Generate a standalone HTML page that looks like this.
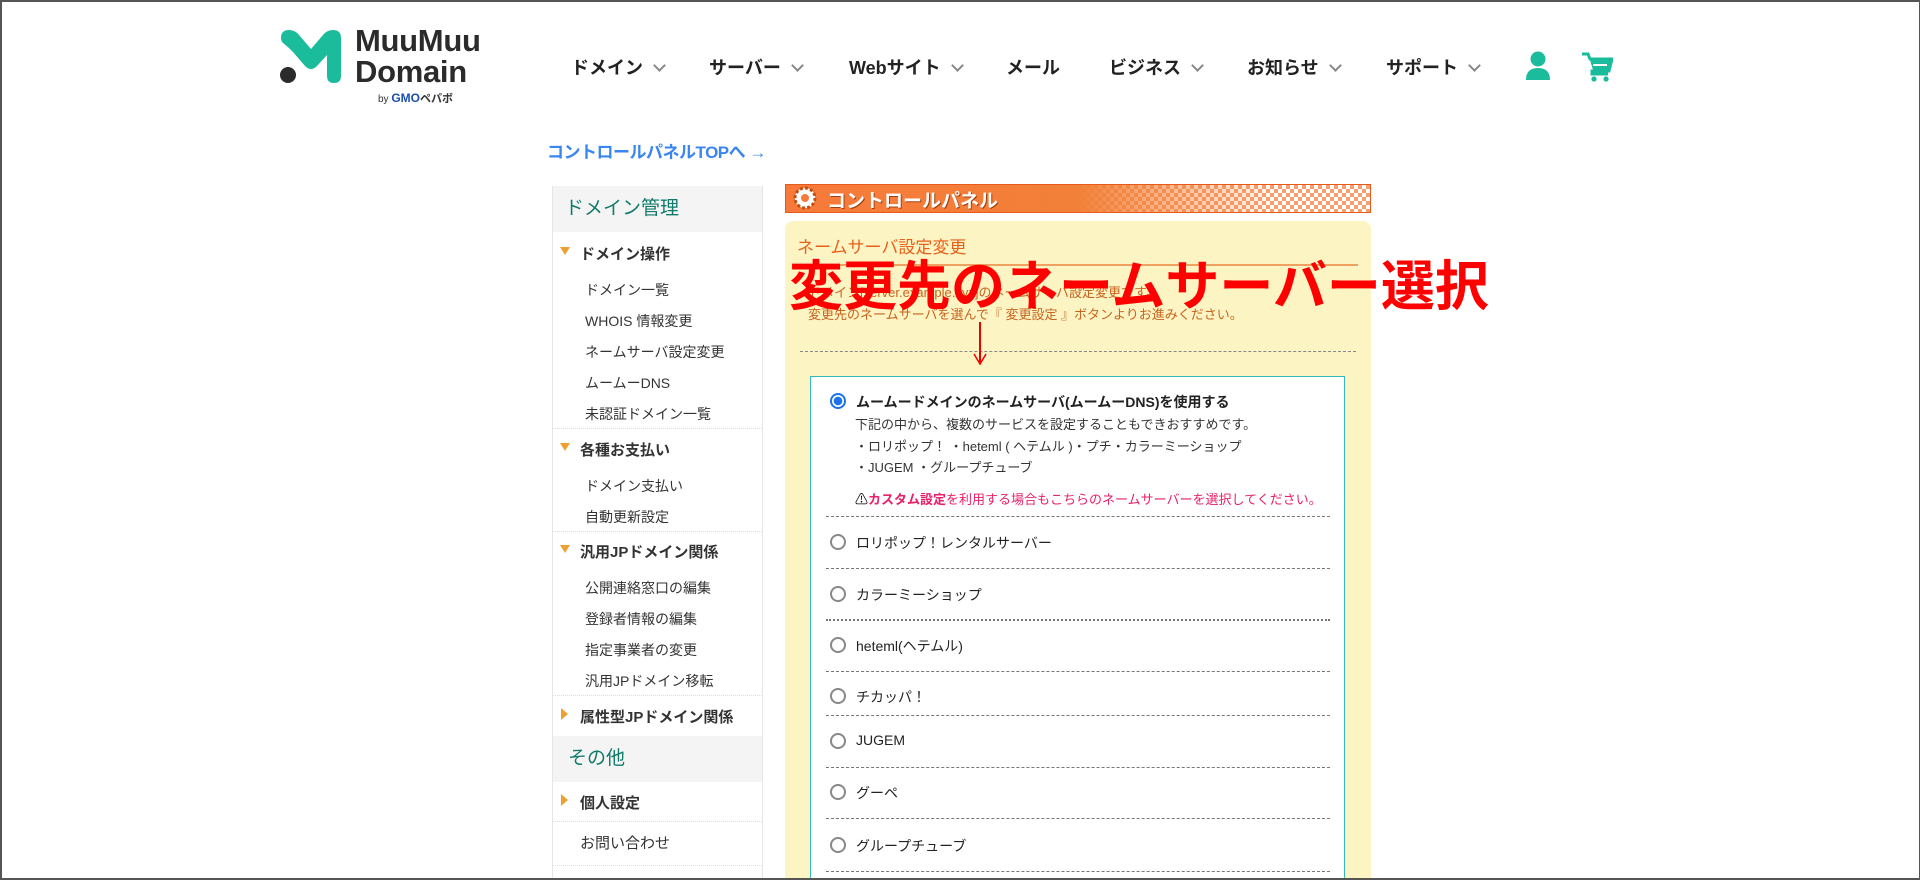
<!DOCTYPE html>
<html><head><meta charset="utf-8"><style>
*{margin:0;padding:0;box-sizing:border-box}
html{width:1920px;height:880px;overflow:hidden}
body{width:1920px;height:880px;overflow:hidden;background:#fff;font-family:"Liberation Sans","Noto Sans CJK JP",sans-serif;position:relative;color:#333}
.frame{position:absolute;left:0;top:0;width:1920px;height:880px;border:2px solid #555;border-right-width:1px;pointer-events:none;z-index:10}
.abs{position:absolute;white-space:nowrap}
.nav{font-size:18px;font-weight:bold;color:#222;top:54px}
.chev{display:inline-block;width:9px;height:9px;border-right:2px solid #888;border-bottom:2px solid #888;transform:rotate(45deg);margin-left:12px;position:relative;top:-4px}
.side{position:absolute;left:552px;top:186px;width:211px;height:700px;border-left:1px solid #e6e6e6;border-right:1px solid #e6e6e6}
.sh{background:#f4f4f4;height:46px;color:#117a6a;font-size:19px;padding-left:12px;line-height:46px}
.cat{font-size:15px;font-weight:bold;color:#333;position:absolute;left:27px;white-space:nowrap}
.tri{position:absolute;left:-20px;top:4px;width:0;height:0;border-left:5px solid transparent;border-right:5px solid transparent;border-top:8px solid #f0a030}
.trir{position:absolute;left:-19px;top:2px;width:0;height:0;border-top:6px solid transparent;border-bottom:6px solid transparent;border-left:7px solid #f0a030}
.sub{font-size:14px;color:#333;position:absolute;left:32px;white-space:nowrap}
.hr{position:absolute;left:0;width:209px;border-top:1px dotted #ddd}
.opt{position:absolute;left:830px;font-size:14px;color:#222;white-space:nowrap}
.rad{position:absolute;left:0;top:1px;width:16px;height:16px;border:2px solid #888;border-radius:50%;background:#fff}
.opt span{position:absolute;left:26px;top:0;white-space:nowrap}
.dl{position:absolute;left:826px;width:504px;border-top:1px dashed #777}
</style></head><body>
<div class="frame"></div>
<svg class="abs" style="left:279px;top:30px" width="64" height="54" viewBox="0 0 64 54">
<path d="M2 8 Q2 0 10 0 Q16 0 20 5 L32 19 L44 5 Q48 0 54 0 Q62 0 62 8 L62 46 Q62 53 55 53 Q48 53 48 46 L48 25 L38 36 Q32 42 26 36 L14 22 Q8 16 4 13 Q2 11 2 8Z" fill="#1abc9c"/>
<circle cx="9" cy="45" r="8" fill="#2b2b2b"/></svg>
<div class="abs" style="left:355px;top:25px;font-size:31px;font-weight:bold;color:#2b2b2b;line-height:31px;letter-spacing:-0.3px">MuuMuu<br>Domain</div>
<div class="abs" style="left:378px;top:90px;font-size:10px;color:#333">by <b style="color:#1a4fb0;font-size:12px">GMO</b><b style="font-size:11px">ペパボ</b></div>
<div class="abs nav" style="left:571px">ドメイン<i class="chev"></i></div>
<div class="abs nav" style="left:709px">サーバー<i class="chev"></i></div>
<div class="abs nav" style="left:849px">Webサイト<i class="chev"></i></div>
<div class="abs nav" style="left:1006px">メール</div>
<div class="abs nav" style="left:1109px">ビジネス<i class="chev"></i></div>
<div class="abs nav" style="left:1247px">お知らせ<i class="chev"></i></div>
<div class="abs nav" style="left:1386px">サポート<i class="chev"></i></div>
<svg class="abs" style="left:1525px;top:51px" width="26" height="30" viewBox="0 0 26 30"><circle cx="13" cy="8" r="7.5" fill="#1abc9c"/><path d="M1 29 Q1 17 13 17 Q25 17 25 29Z" fill="#1abc9c"/></svg>
<svg class="abs" style="left:1581px;top:51px" width="32" height="32" viewBox="0 0 32 32"><path d="M1 3 L7 3 L9 8 L31 8 L28 20 L11 20 L11 23 L27 23" fill="none" stroke="#1abc9c" stroke-width="3"/><path d="M9 9 L30 9 L27 19 L12 19Z" fill="#1abc9c"/><rect x="12" y="13" width="14" height="2" fill="#fff"/><circle cx="13" cy="28" r="2.6" fill="#1abc9c"/><circle cx="25" cy="28" r="2.6" fill="#1abc9c"/></svg>
<div class="abs" style="left:547px;top:138px;font-size:17px;font-weight:bold;color:#3a86f0;letter-spacing:-0.5px">コントロールパネルTOPへ →</div>
<div class="side">
<div class="sh">ドメイン管理</div>
<div class="cat" style="top:57px"><i class="tri"></i>ドメイン操作</div>
<div class="sub" style="top:94px">ドメイン一覧</div>
<div class="sub" style="top:125px">WHOIS 情報変更</div>
<div class="sub" style="top:156px">ネームサーバ設定変更</div>
<div class="sub" style="top:187px">ムームーDNS</div>
<div class="sub" style="top:218px">未認証ドメイン一覧</div>
<div class="hr" style="top:242px"></div>
<div class="cat" style="top:253px"><i class="tri"></i>各種お支払い</div>
<div class="sub" style="top:290px">ドメイン支払い</div>
<div class="sub" style="top:321px">自動更新設定</div>
<div class="hr" style="top:345px"></div>
<div class="cat" style="top:355px"><i class="tri"></i>汎用JPドメイン関係</div>
<div class="sub" style="top:392px">公開連絡窓口の編集</div>
<div class="sub" style="top:423px">登録者情報の編集</div>
<div class="sub" style="top:454px">指定事業者の変更</div>
<div class="sub" style="top:485px">汎用JPドメイン移転</div>
<div class="hr" style="top:509px"></div>
<div class="cat" style="top:520px"><i class="trir"></i>属性型JPドメイン関係</div>
<div style="position:absolute;left:0;top:550px;width:209px"><div class="sh" style="padding-left:15px">その他</div></div>
<div class="cat" style="top:606px"><i class="trir"></i>個人設定</div>
<div class="hr" style="top:635px"></div>
<div class="cat" style="top:646px;font-weight:normal">お問い合わせ</div>
<div class="hr" style="top:679px"></div>
</div>
<div class="abs" style="left:785px;top:184px;width:586px;height:29px;border:1px solid #e85a1a;background:linear-gradient(90deg,#f77a3a 0%,#f28038 50%,rgba(242,128,56,0) 85%),repeating-conic-gradient(#f6a070 0 25%,#fff 0 50%) 0 0/8px 8px"></div>
<svg class="abs" style="left:792px;top:185px" width="26" height="26" viewBox="0 0 26 26"><circle cx="13" cy="13" r="10" fill="#fff" stroke="#c05010" stroke-width="3" stroke-dasharray="3 2.2"/><circle cx="13" cy="13" r="5" fill="#f77a3a" stroke="#fff" stroke-width="2"/></svg>
<div class="abs" style="left:827px;top:186px;font-size:19px;font-weight:bold;color:#fff;text-shadow:1px 1px 0 #a04010">コントロールパネル</div>
<div class="abs" style="left:785px;top:221px;width:586px;height:659px;background:#fdf4c4;border-radius:8px 8px 0 0"></div>
<div class="abs" style="left:797px;top:233px;font-size:17px;color:#e8601a">ネームサーバ設定変更</div>
<div class="abs" style="left:797px;top:264px;width:561px;border-top:2px solid #f0a060"></div>
<div class="abs" style="left:808px;top:282px;font-size:13px;color:#c8641e">ドメイン[server.example.xyz]のネームサーバ設定変更です。</div>
<div class="abs" style="left:808px;top:304px;font-size:13px;color:#c8641e">変更先のネームサーバを選んで『 変更設定 』ボタンよりお進みください。</div>
<div class="abs" style="left:800px;top:351px;width:556px;border-top:1px dashed #888"></div>
<div class="abs" style="left:789px;top:242px;font-size:54px;font-weight:bold;color:#ff0000;letter-spacing:0">変更先のネームサーバー選択</div>
<div class="abs" style="left:979px;top:322px;width:2px;height:40px;background:#e00"></div>
<svg class="abs" style="left:973px;top:352px" width="14" height="14"><path d="M1 2 L7 12 L13 2" fill="none" stroke="#e00" stroke-width="1.5"/></svg>
<div class="abs" style="left:810px;top:376px;width:535px;height:504px;background:#fff;border:1px solid #33bbbb"></div>
<div class="opt" style="top:392px"><i class="rad" style="border-color:#1a73e8;background:radial-gradient(#1a73e8 0 4px,#fff 4.5px)"></i><span style="font-weight:bold">ムームードメインのネームサーバ(ムームーDNS)を使用する</span></div>
<div class="abs" style="left:855px;top:414px;font-size:13px;line-height:21.5px;color:#333">下記の中から、複数のサービスを設定することもできおすすめです。<br>・ロリポップ！ ・heteml ( ヘテムル )・プチ・カラーミーショップ<br>・JUGEM ・グループチューブ</div>
<div class="abs" style="left:855px;top:489px;font-size:13px;color:#e8206a"><span style="color:#000;font-size:13px">⚠</span><b>カスタム設定</b>を利用する場合もこちらのネームサーバーを選択してください。</div>
<div class="dl" style="top:516px"></div>
<div class="opt" style="top:533px"><i class="rad"></i><span>ロリポップ！レンタルサーバー</span></div>
<div class="dl" style="top:568px"></div>
<div class="opt" style="top:585px"><i class="rad"></i><span>カラーミーショップ</span></div>
<div class="dl" style="top:619px;border-top-style:dotted;border-top-width:2px"></div>
<div class="opt" style="top:636px"><i class="rad"></i><span>heteml(ヘテムル)</span></div>
<div class="dl" style="top:671px"></div>
<div class="opt" style="top:687px"><i class="rad"></i><span>チカッパ！</span></div>
<div class="dl" style="top:715px"></div>
<div class="opt" style="top:732px"><i class="rad"></i><span>JUGEM</span></div>
<div class="dl" style="top:767px"></div>
<div class="opt" style="top:783px"><i class="rad"></i><span>グーペ</span></div>
<div class="dl" style="top:818px"></div>
<div class="opt" style="top:836px"><i class="rad"></i><span>グループチューブ</span></div>
<div class="dl" style="top:871px"></div>
</body></html>
